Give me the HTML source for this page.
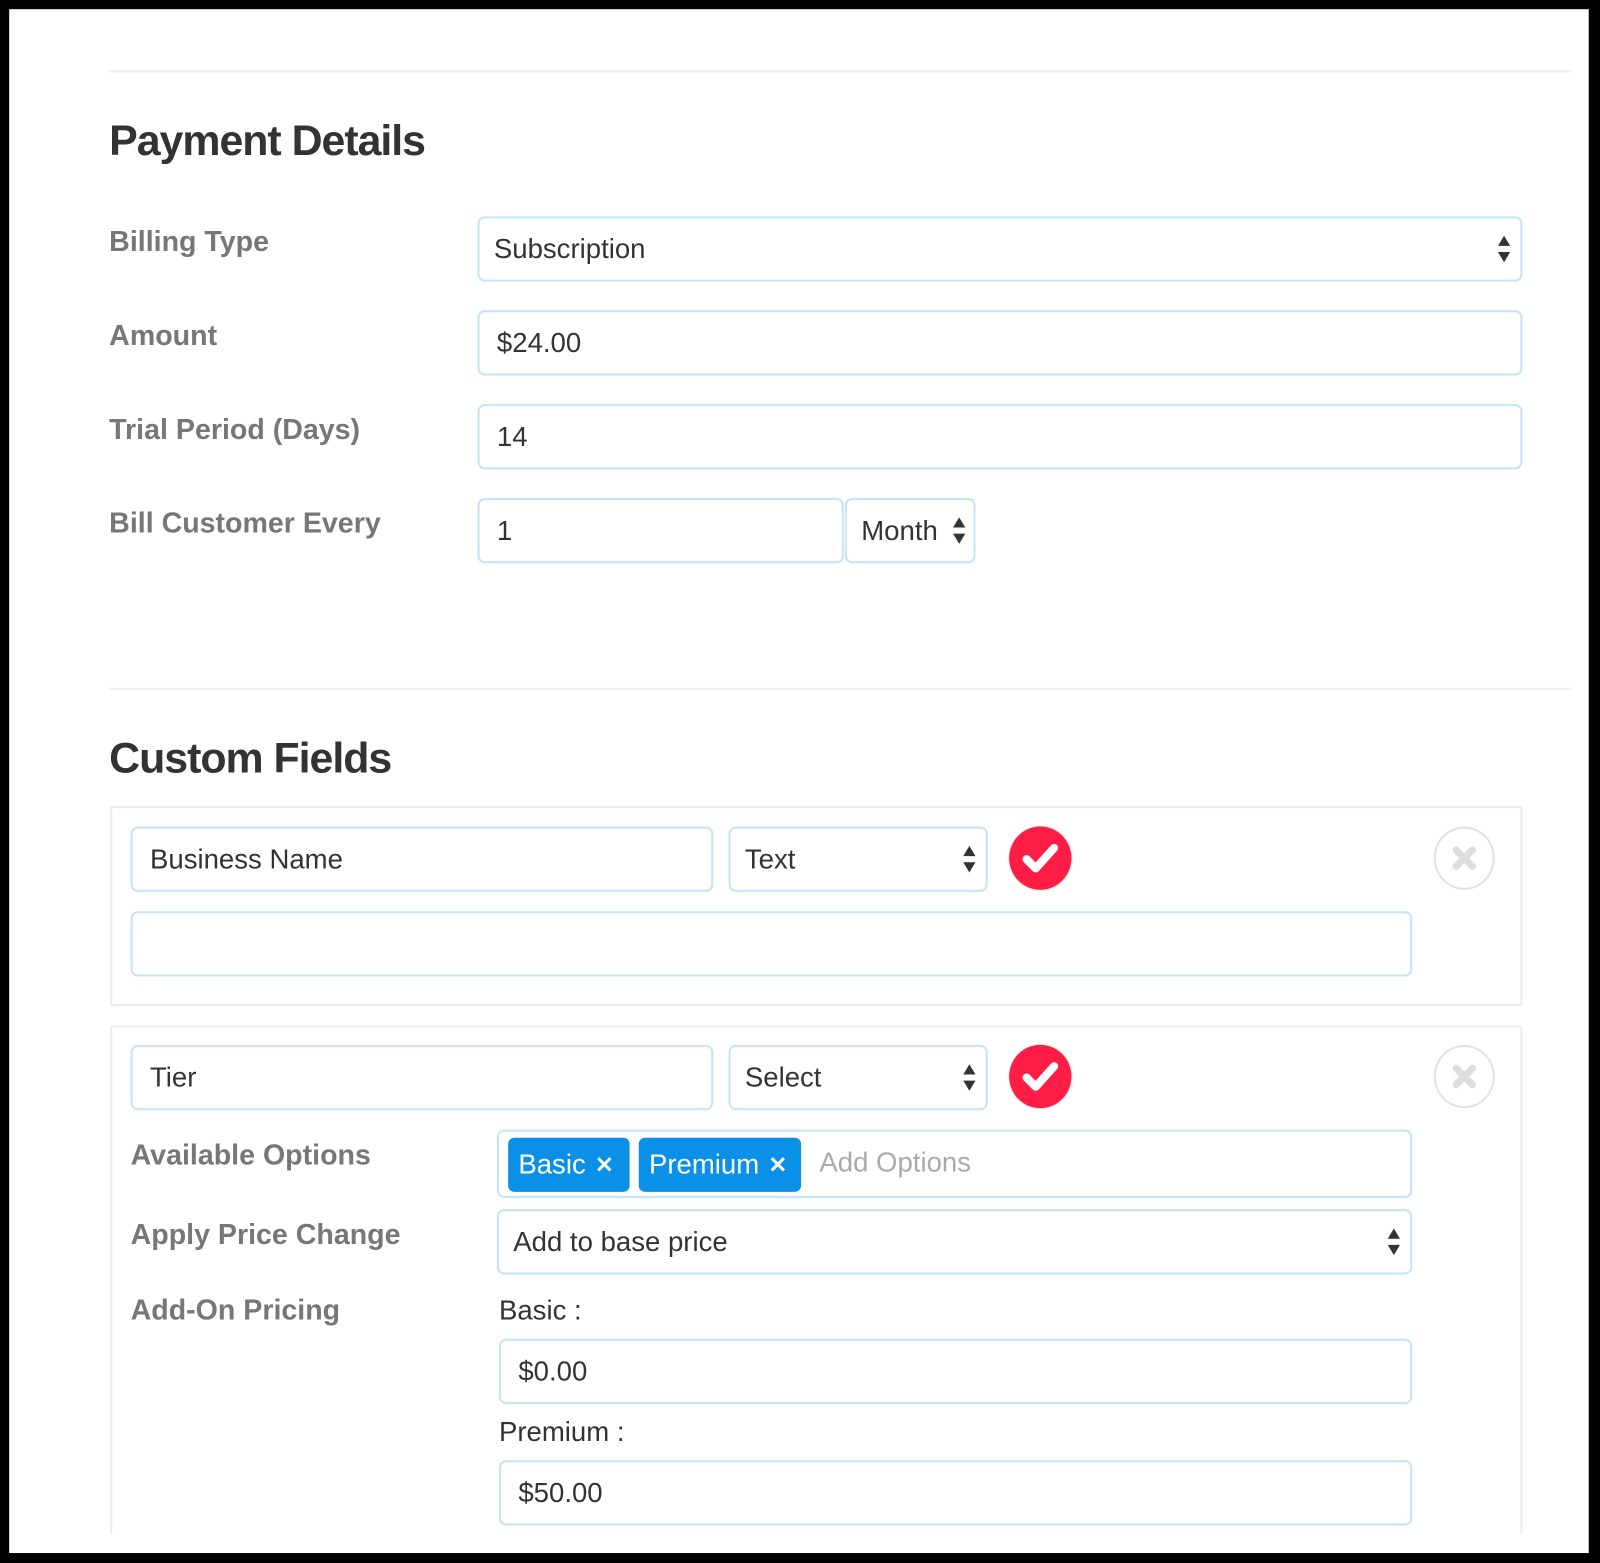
<!DOCTYPE html>
<html><head><meta charset="utf-8"><style>
html,body{margin:0;padding:0;background:#000;width:1600px;height:1563px;overflow:hidden}
#s{position:absolute;left:0;top:0;width:1568px;height:1532px;transform:scale(1.0204);transform-origin:0 0;font-family:"Liberation Sans",Arial,sans-serif}
#w{position:absolute;left:9px;top:9px;width:1548px;height:1513px;background:#fff;overflow:hidden}
.a{position:absolute}
.hr{position:absolute;height:2px;background:#eee;left:98px;width:1433px}
h2{position:absolute;margin:0;font-size:42px;font-weight:bold;color:#333;letter-spacing:-1px;left:98px}
.l{position:absolute;font-size:28px;font-weight:bold;color:#777;left:98px}
.in{position:absolute;box-sizing:border-box;border:2px solid #c6e3f8;border-radius:7px;background:#fff;font-size:27px;color:#333;padding-left:17px;display:flex;align-items:center}
.ar{position:absolute;right:10px;top:50%;transform:translateY(-50%);width:12px;height:26px}
.ar:before{content:"";position:absolute;left:0;top:0;border-left:6px solid transparent;border-right:6px solid transparent;border-bottom:10px solid #333}
.ar:after{content:"";position:absolute;left:0;bottom:0;border-left:6px solid transparent;border-right:6px solid transparent;border-top:10px solid #333}
.panel{position:absolute;box-sizing:border-box;border:2px solid #ececec;left:99px;width:1384px}
.ck{position:absolute;width:61px;height:62px;border-radius:50%;background:#ff1d46;box-shadow:0 0 2px #bbb}
.x{position:absolute;width:60px;height:62px;border-radius:50%;border:2px solid #e2e2e2;box-sizing:border-box}
.tag{position:absolute;background:#0a90e6;color:#fff;border-radius:6px;font-size:27px;display:flex;align-items:center;padding-left:10px;box-sizing:border-box;top:6px;height:53px}
.tag b{font-size:22px;margin-left:9px}
</style></head><body><div id="s"><div id="w">
<div class="hr" style="top:60px"></div>
<h2 style="top:105px">Payment Details</h2>
<div class="l" style="top:212px">Billing Type</div>
<div class="in" style="left:459px;top:203px;width:1024px;height:64px;padding-left:14px">Subscription<span class="ar"></span></div>
<div class="l" style="top:304px">Amount</div>
<div class="in" style="left:459px;top:295px;width:1024px;height:64px">$24.00</div>
<div class="l" style="top:396px">Trial Period (Days)</div>
<div class="in" style="left:459px;top:387px;width:1024px;height:64px">14</div>
<div class="l" style="top:488px">Bill Customer Every</div>
<div class="in" style="left:459px;top:479px;width:359px;height:64px">1</div>
<div class="in" style="left:819px;top:479px;width:128px;height:64px;padding-left:14px">Month<span class="ar" style="right:8px"></span></div>
<div class="hr" style="top:665px"></div>
<h2 style="top:710px">Custom Fields</h2>

<div class="panel" style="top:781px;height:196px"></div>
<div class="in" style="left:119px;top:801px;width:571px;height:64px">Business Name</div>
<div class="in" style="left:705px;top:801px;width:254px;height:64px;padding-left:14px">Text<span class="ar"></span></div>
<div class="ck" style="left:980px;top:801px"><svg width="61" height="62" viewBox="0 0 61 62"><path d="M17 32 L26 41 L44 21" stroke="#fff" stroke-width="8" fill="none" stroke-linecap="round" stroke-linejoin="round"/></svg></div>
<div class="x" style="left:1396px;top:801px"><svg width="56" height="58" viewBox="0 0 56 58"><path d="M20 21 L36 37 M36 21 L20 37" stroke="#ddd" stroke-width="7" stroke-linecap="round"/></svg></div>
<div class="in" style="left:119px;top:884px;width:1256px;height:64px"></div>

<div class="panel" style="top:996px;height:600px;border-bottom:none;height:498px"></div>
<div class="in" style="left:119px;top:1015px;width:571px;height:64px">Tier</div>
<div class="in" style="left:705px;top:1015px;width:254px;height:64px;padding-left:14px">Select<span class="ar"></span></div>
<div class="ck" style="left:980px;top:1015px"><svg width="61" height="62" viewBox="0 0 61 62"><path d="M17 32 L26 41 L44 21" stroke="#fff" stroke-width="8" fill="none" stroke-linecap="round" stroke-linejoin="round"/></svg></div>
<div class="x" style="left:1396px;top:1015px"><svg width="56" height="58" viewBox="0 0 56 58"><path d="M20 21 L36 37 M36 21 L20 37" stroke="#ddd" stroke-width="7" stroke-linecap="round"/></svg></div>
<div class="l" style="left:119px;top:1107px">Available Options</div>
<div class="in" style="left:478px;top:1098px;width:897px;height:67px;padding:0">
<div class="tag" style="left:9px;width:119px">Basic<b>✕</b></div>
<div class="tag" style="left:137px;width:159px">Premium<b>✕</b></div>
<span class="a" style="left:314px;top:15px;color:#aaa">Add Options</span></div>
<div class="l" style="left:119px;top:1185px">Apply Price Change</div>
<div class="in" style="left:478px;top:1176px;width:897px;height:64px;padding-left:14px">Add to base price<span class="ar"></span></div>
<div class="l" style="left:119px;top:1259px">Add-On Pricing</div>
<div class="a" style="left:480px;top:1260px;font-size:27px;color:#333">Basic :</div>
<div class="in" style="left:480px;top:1303px;width:895px;height:64px">$0.00</div>
<div class="a" style="left:480px;top:1379px;font-size:27px;color:#333">Premium :</div>
<div class="in" style="left:480px;top:1422px;width:895px;height:64px">$50.00</div>
</div></div></body></html>
